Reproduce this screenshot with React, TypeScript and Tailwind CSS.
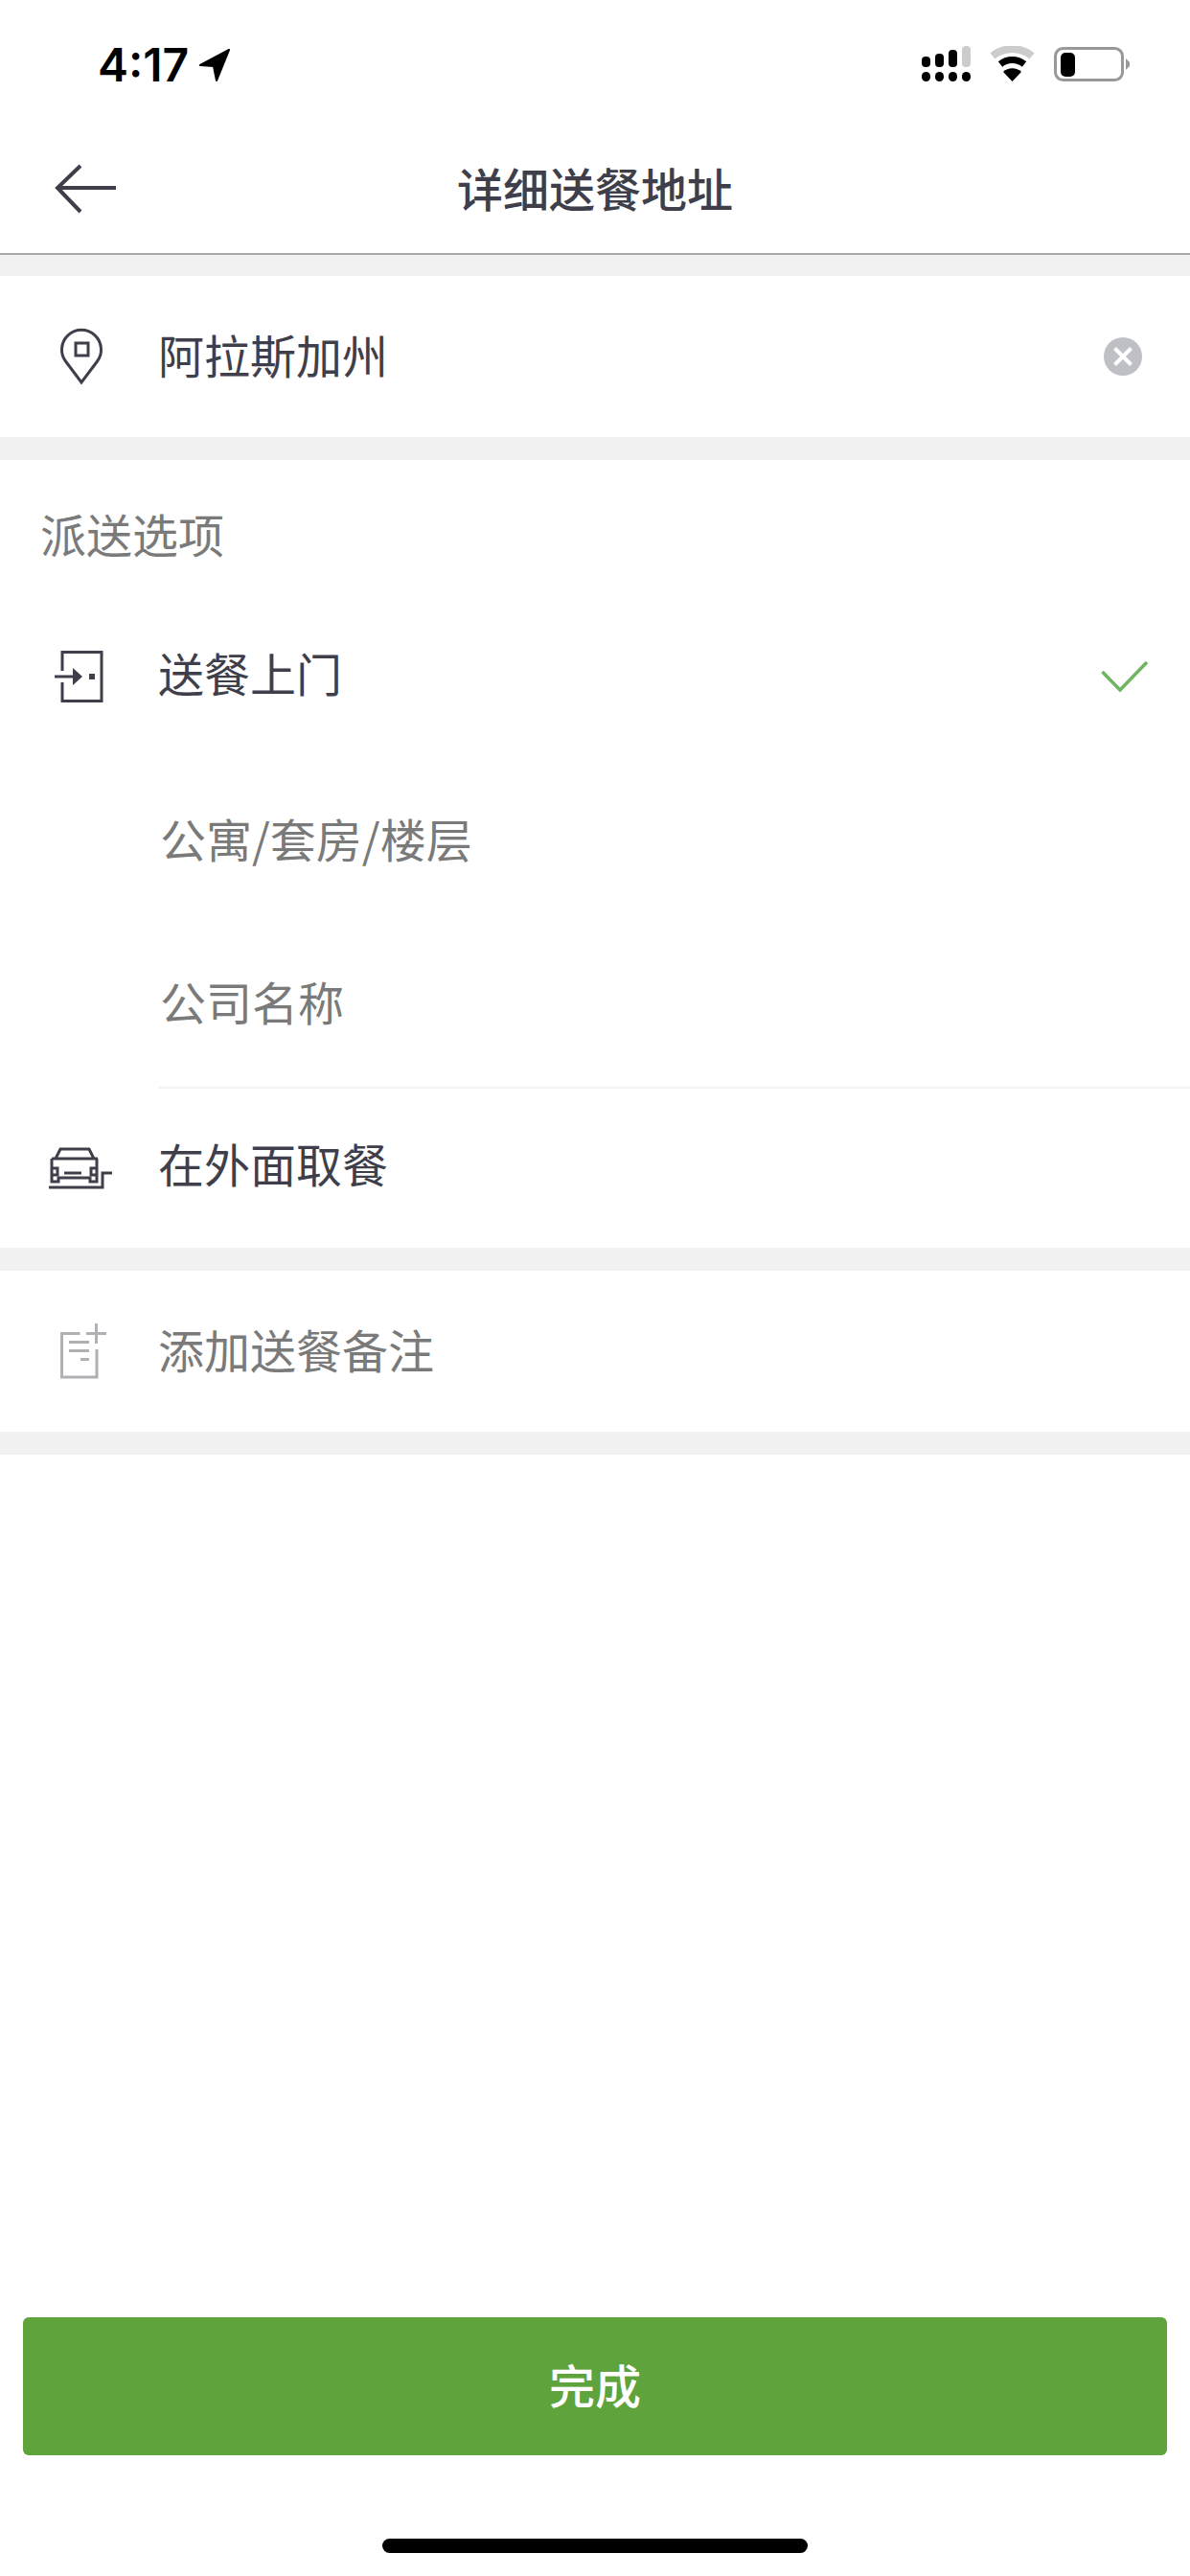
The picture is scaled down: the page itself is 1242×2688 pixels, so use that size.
const cjk = "font-['Noto_Sans_CJK_SC','Noto_Sans',sans-serif]";

function StatusIcons() {
  return (
    <div className="flex items-start">
      {/* signal */}
      <svg width="52" height="38" viewBox="960 48 52 38" fill="#000">
        <rect x="960" y="59" width="9" height="11" rx="4" />
        <rect x="974" y="56" width="9" height="14" rx="4" />
        <rect x="988" y="52" width="9" height="18" rx="4" />
        <rect x="1002" y="48" width="9" height="22" rx="4" fill="#cccccc" />
        <rect x="960" y="75" width="9" height="10" rx="4.5" />
        <rect x="974" y="75" width="9" height="10" rx="4.5" />
        <rect x="988" y="75" width="9" height="10" rx="4.5" />
        <rect x="1002" y="75" width="9" height="10" rx="4.5" />
      </svg>
      {/* wifi */}
      <svg width="50" height="38" viewBox="1030 48 50 38" className="ml-[18px]">
        <path d="M1034 58.5 A32 32 0 0 1 1075 58.5" fill="none" stroke="#cccccc" strokeWidth="8" />
        <path d="M1042 67 A20 20 0 0 1 1067 67" fill="none" stroke="#000" strokeWidth="7" />
        <path d="M1054.5 85 L1045 75 A14 14 0 0 1 1064 75 Z" fill="#000" />
      </svg>
      {/* battery */}
      <svg width="80" height="38" viewBox="1098 48 80 38" className="ml-[18px]">
        <rect x="1099.5" y="50.5" width="70" height="33" rx="8" fill="none" stroke="#999999" strokeWidth="3" />
        <rect x="1105" y="55" width="15" height="25" rx="5" fill="#000" />
        <path d="M1173 61 L1177 65 L1177 69 L1173 73 Z" fill="#999999" />
      </svg>
    </div>
  );
}

function Row({ icon, children, className }: { icon?: React.ReactNode; children: React.ReactNode; className: string }) {
  return (
    <div className={`flex items-center bg-white ${className}`}>
      <div className="w-[165px] shrink-0">{icon}</div>
      {children}
    </div>
  );
}

const band = "h-6 bg-[#f1f1f1]";
const label = `${cjk} text-[48px] leading-none text-[#3f3f4b]`;
const hint = `${cjk} text-[48px] leading-none text-[#7a7a7a]`;

export default function App() {
  return (
    <div className={`flex min-h-[2688px] w-[1242px] flex-col bg-white ${cjk}`}>
      {/* status bar */}
      <div className="flex h-[132px] items-start justify-between pl-[102px] pr-[62px] pt-[48px]">
        <div className="flex items-center">
          <span className="font-['Inter',sans-serif] text-[48px] font-semibold leading-[40px] text-black">4:17</span>
          <svg width="32" height="34" viewBox="0 0 32 34" className="ml-[11px]">
            <path d="M31 1 L1 17 L15 18 L18 33 Z" fill="#000" stroke="#000" strokeWidth="2" strokeLinejoin="round" />
          </svg>
        </div>
        <StatusIcons />
      </div>

      {/* header */}
      <div className="relative flex h-[134px] items-center justify-center border-b-2 border-[#aaaaaa]">
        <button className="absolute left-[57px] top-[39px]">
          <svg width="66" height="52" viewBox="0 0 66 52" fill="none" stroke="#3f3f4b" strokeWidth="4" className="block">
            <path d="M27 2 L3 25 L27 50" />
            <path d="M3 25 H64" />
          </svg>
        </button>
        <h1 className="pb-[6px] text-[48px] font-medium leading-none text-[#3f3f4b]">详细送餐地址</h1>
      </div>
      <div className="h-[22px] bg-[#f1f1f1]" />

      {/* address */}
      <Row
        className="h-[168px]"
        icon={
          <svg width="50" height="64" viewBox="0 0 50 64" fill="none" stroke="#3f3f4b" strokeWidth="3" className="ml-[60px]">
            <path d="M25 59 L8.5 37 A20.5 20.5 0 1 1 41.5 37 Z" strokeLinejoin="miter" />
            <rect x="19" y="18" width="13" height="13" />
          </svg>
        }
      >
        <span className={`flex-1 pb-[6px] ${label}`}>阿拉斯加州</span>
        <svg width="40" height="40" viewBox="0 0 40 40" className="mr-[50px]">
          <circle cx="20" cy="20" r="20" fill="#bfc0c5" />
          <path d="M11.5 11.5 L28.5 28.5 M28.5 11.5 L11.5 28.5" stroke="#fff" strokeWidth="4" />
        </svg>
      </Row>
      <div className={band} />

      {/* delivery options */}
      <div className="flex h-[141px] items-center bg-white pl-[42px] pt-[10px]">
        <span className={hint}>派送选项</span>
      </div>
      <Row
        className="h-[170px]"
        icon={
          <svg width="54" height="58" viewBox="57 681 54 58" fill="none" stroke="#3f3f4b" strokeWidth="3" className="ml-[57px]">
            <path d="M65 704 V684.5 H106 V735.5 H65 V716" />
            <path d="M57 710 H77" />
            <path d="M76 701 L86 710 L76 719 Z" fill="#3f3f4b" stroke="none" />
            <rect x="93" y="707" width="6" height="6" fill="#3f3f4b" stroke="none" />
          </svg>
        }
      >
        <span className={`flex-1 pb-[10px] ${label}`}>送餐上门</span>
        <svg width="50" height="34" viewBox="0 0 50 34" fill="none" stroke="#6fb561" strokeWidth="3.5" className="mr-[43px]">
          <path d="M1.5 12 L20 31 L48 2" />
        </svg>
      </Row>
      <Row className="h-[175px]">
        <span className={`pb-[10px] pl-[2px] ${hint}`}>公寓/套房/楼层</span>
      </Row>
      <Row className="h-[168px]">
        <span className={`pb-[12px] pl-[2px] ${hint}`}>公司名称</span>
      </Row>
      <div className="ml-[165px] h-[2px] bg-[#f3f3f3]" />
      <Row
        className="h-[166px]"
        icon={
          <svg width="68" height="46" viewBox="20 25 68 46" fill="none" stroke="#3f3f4b" strokeWidth="3" className="ml-[50px]">
            <path d="M24 38 H72 M28 38 L33 28 H63 L68 38" />
            <path d="M24 38 V62 H31 V58 H64 V62 H71 V38" />
            <path d="M24 48 H30 V55 H24 M71 48 H65 V55 H71" />
            <path d="M37 53 H55" />
            <path d="M21 68 H77 V53 H87" />
          </svg>
        }
      >
        <span className={`pb-[12px] ${label}`}>在外面取餐</span>
      </Row>
      <div className={band} />

      {/* note */}
      <Row
        className="h-[168px]"
        icon={
          <svg width="50" height="60" viewBox="32 19 50 60" fill="none" stroke="#b0b0b5" strokeWidth="3" className="ml-[62px]">
            <path d="M53.5 30.5 H34.5 V76 H71 V47" />
            <path d="M60 30.5 H81 M70.5 20 V41" />
            <path d="M42 39.5 H63 M42 48.5 H63 M54 57.5 H63" />
          </svg>
        }
      >
        <span className={`pb-[6px] ${hint}`}>添加送餐备注</span>
      </Row>
      <div className={band} />

      <div className="flex-1" />

      {/* footer */}
      <button className="mx-6 flex h-[144px] items-center justify-center rounded-[6px] bg-[#5fa33c] pb-[6px] text-[48px] font-medium leading-none text-white">
        完成
      </button>
      <div className="mx-auto mb-[24px] mt-[87px] h-[15px] w-[444px] rounded-full bg-black" />
    </div>
  );
}
